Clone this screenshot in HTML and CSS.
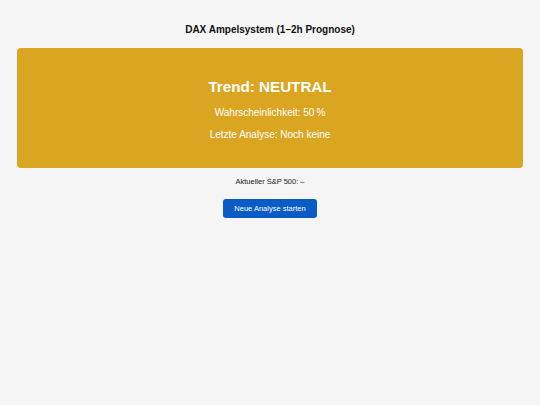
FILE: index.html
```html
<!DOCTYPE html>
<html lang="de">
<head>
    <meta charset="UTF-8">
    <meta name="viewport" content="width=device-width, initial-scale=1.0">
    <title>DAX Ampelsystem</title>
    <link rel="stylesheet" href="styles.css">
</head>
<body>
    <h1>DAX Ampelsystem (1–2h Prognose)</h1>
    <div id="ampel" class="ampel neutral">
        <div class="trend">Trend: NEUTRAL</div>
        <p id="prob">Wahrscheinlichkeit: 50&thinsp;%</p>
        <p id="lastRun">Letzte Analyse: Noch keine</p>
    </div>
    <p class="spx" id="spx">Aktueller S&amp;P 500: –</p>
    <button id="runButton">Neue Analyse starten</button>
</body>
</html>
```

FILE: styles.css
```css
body {
    font-family: 'Liberation Sans', Arial, sans-serif;
    text-align: center;
    margin: 0;
    padding: 17px 17px;
    background: #f5f5f5;
    color: #222;
}
h1 {
    font-size: 10px;
    font-weight: bold;
    margin: 6.5px 0 13.5px;
    color: #111;
}
.ampel {
    border-radius: 4px;
    padding: 30px 10px 28px;
    color: #fff;
}
.ampel.neutral {
    background-color: #daa520;
}
.trend {
    font-size: 15.2px;
    font-weight: bold;
    margin-bottom: 12px;
}
.ampel p {
    font-size: 10px;
    margin: 0 0 10.5px;
}
.ampel p:last-child {
    margin-bottom: 0;
}
.spx {
    font-size: 7.5px;
    margin: 9px 0 11px;
}
button {
    background: #0a5bc4;
    color: #fff;
    border: none;
    border-radius: 3px;
    font-family: inherit;
    font-size: 7.5px;
    padding: 5px 11px;
    cursor: pointer;
}
```
